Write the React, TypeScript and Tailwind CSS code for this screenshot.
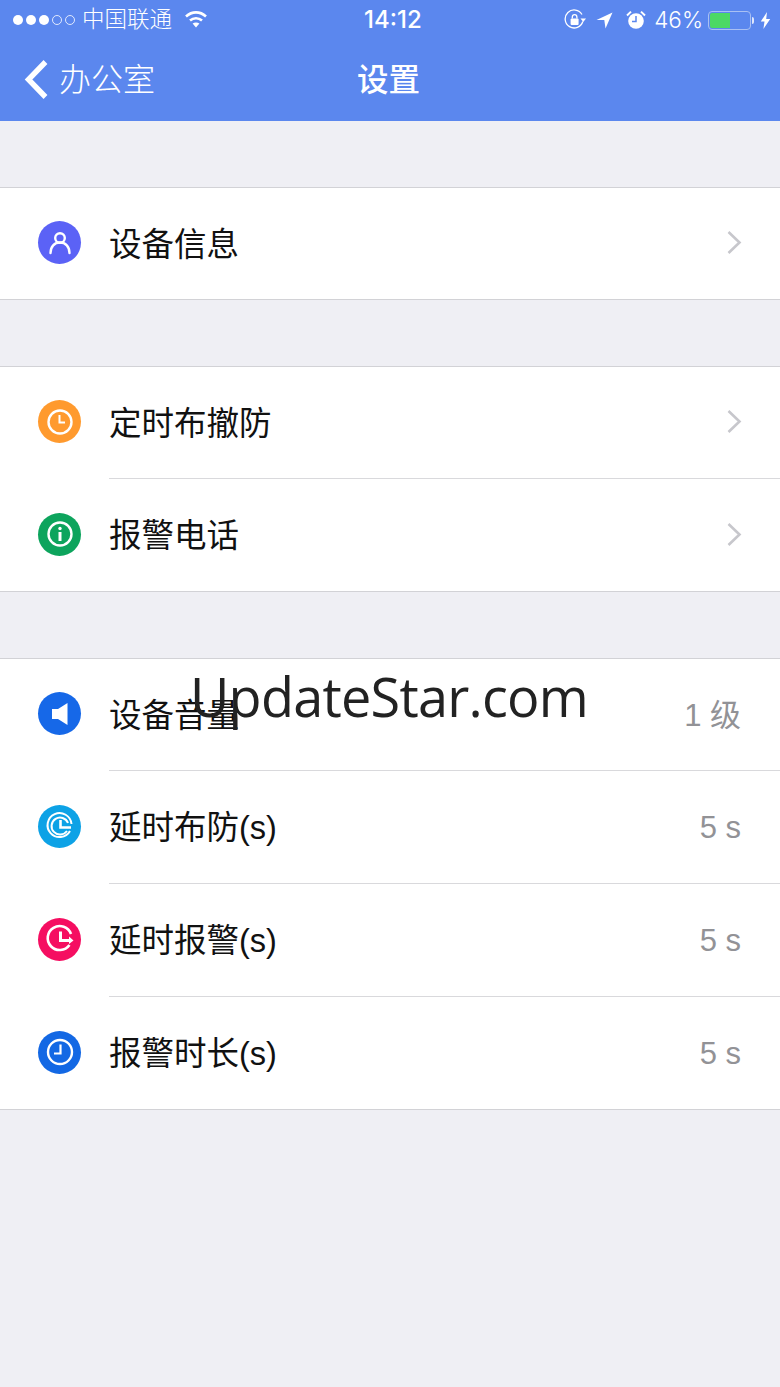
import React from "react";

const FONT = "font-['Liberation_Sans','Noto_Sans_CJK_SC',sans-serif]";

function Wifi() {
  return (
    <svg width="24" height="18" viewBox="0 0 24 18" fill="none" stroke="white" strokeLinecap="butt">
      <path d="M2 6.5C8 1 16 1 22 6.5" strokeWidth="2.6" />
      <path d="M6 10.5C9.5 7.4 14.5 7.4 18 10.5" strokeWidth="2.6" />
      <path d="M12 17.5L8.6 13.6C10.5 12.2 13.5 12.2 15.4 13.6Z" fill="white" stroke="none" />
    </svg>
  );
}

function RotationLock() {
  return (
    <svg width="22" height="22" viewBox="0 0 22 22" fill="none">
      <path d="M18.8 12.5A9 9 0 1 1 18 5.5" stroke="white" strokeWidth="1.3" />
      <path d="M16.5 9.5h5.5l-2.7 3.4Z" fill="white" />
      <rect x="6.6" y="9.5" width="8" height="6.5" rx="1" fill="white" />
      <path d="M8.3 9.5V8a2.3 2.3 0 0 1 4.6 0v1.5" stroke="white" strokeWidth="1.3" />
    </svg>
  );
}

function Location() {
  return (
    <svg width="17" height="17" viewBox="0 0 17 17">
      <path d="M16.5 0.5L0.5 8h7.8l1.2 8.5Z" fill="white" />
    </svg>
  );
}

function Alarm() {
  return (
    <svg width="20" height="20" viewBox="0 0 20 20" fill="none">
      <circle cx="10" cy="11" r="7.8" fill="white" />
      <path d="M10 6v5.5H6" stroke="#5b87ee" strokeWidth="1.5" />
      <path d="M1 5.5L5 1.6M19 5.5L15 1.6" stroke="white" strokeWidth="2" />
    </svg>
  );
}

function Battery() {
  return (
    <div className="flex items-center">
      <div className="h-[19px] w-[43px] rounded-[4px] border border-[#a9c0f3] p-px">
        <div className="h-full w-[20px] rounded-l-[2px] bg-[#4cd964]" />
      </div>
      <div className="ml-[1px] h-[7px] w-[2px] rounded-r-[2px] bg-[#dfe7fb]" />
    </div>
  );
}

function Bolt() {
  return (
    <svg width="11" height="17" viewBox="0 0 11 17">
      <path d="M7 0L0.8 9.5h3.7L3.4 17l6.8-10H6.2Z" fill="white" />
    </svg>
  );
}

function Signal() {
  return (
    <div className="flex items-center gap-[3px]">
      <span className="h-[10px] w-[10px] rounded-full bg-white" />
      <span className="h-[10px] w-[10px] rounded-full bg-white" />
      <span className="h-[10px] w-[10px] rounded-full bg-white" />
      <span className="h-[10px] w-[10px] rounded-full border border-white/80" />
      <span className="h-[10px] w-[10px] rounded-full border border-white/80" />
    </div>
  );
}

function Circle({ color, children }: { color: string; children: React.ReactNode }) {
  return (
    <div className={`mt-[-2px] flex h-[43px] w-[43px] shrink-0 items-center justify-center rounded-full ${color}`}>
      <svg width="44" height="44" viewBox="0 0 44 44" fill="none" stroke="white" strokeWidth="2.4" className="shrink-0">
        {children}
      </svg>
    </div>
  );
}

function Chevron() {
  return (
    <svg width="17" height="25" viewBox="0 0 17 25" fill="none" className="mr-[-2px] mt-[-2px]">
      <path d="M2.5 2L13.5 12.5L2.5 23" stroke="#c7c7cc" strokeWidth="2.6" />
    </svg>
  );
}

function Row({
  icon,
  label,
  value,
  h,
}: {
  icon: React.ReactNode;
  label: string;
  value?: string;
  h: string;
}) {
  return (
    <div className={`flex items-center pl-[38px] pr-[39px] ${h}`}>
      {icon}
      <div className="ml-[28px] flex-1 pt-[2px] text-[32.5px] leading-[40px] font-normal text-[#111111]">{label}</div>
      {value ? (
        <div className="pt-[2px] text-[31px] leading-[40px] font-normal text-[#929296]">{value}</div>
      ) : (
        <Chevron />
      )}
    </div>
  );
}

const Divider = () => <div className="ml-[109px] h-px bg-[#d9d9dc]" />;

const person = (
  <Circle color="bg-[#5b62f6]">
    <circle cx="22" cy="17" r="4.8" />
    <path d="M12.5 32c0-6.5 4-10.5 9.5-10.5s9.5 4 9.5 10.5" strokeLinecap="round" />
  </Circle>
);
const clockOrange = (
  <Circle color="bg-[#ff9a2e]">
    <circle cx="22" cy="22" r="11.5" />
    <path d="M21.5 15v7.5h5.5" strokeWidth="2" />
  </Circle>
);
const info = (
  <Circle color="bg-[#0da45d]">
    <circle cx="22" cy="22" r="11.5" />
    <circle cx="22" cy="16.5" r="1.7" fill="white" stroke="none" />
    <path d="M22 20v9" strokeWidth="3" />
  </Circle>
);
const speaker = (
  <Circle color="bg-[#1668e8]">
    <path d="M14 17h6L29.5 11v22L20 27h-6Z" fill="white" stroke="none" />
  </Circle>
);
const delayCyan = (
  <Circle color="bg-[#0da2e6]">
    <path d="M32 27A12 12 0 1 1 33.5 20" strokeWidth="2" />
    <path d="M29 27A8.5 8.5 0 1 1 30 19" strokeWidth="2" />
    <path d="M22.5 16v7.5H33" strokeWidth="2.6" />
  </Circle>
);
const delayPink = (
  <Circle color="bg-[#f50e61]">
    <path d="M31.5 28A12 12 0 1 1 33 17" strokeWidth="2.6" />
    <path d="M22.5 14.5V23.5H33" strokeWidth="3" />
    <path d="M31 19.5l4.5 4-4.5 3.5Z" fill="white" stroke="none" />
  </Circle>
);
const clockBlue = (
  <Circle color="bg-[#1368e4]">
    <circle cx="22" cy="22" r="12" />
    <path d="M22.5 14.5v9h-6.5" strokeWidth="2.2" />
  </Circle>
);

export default function App() {
  return (
    <div className={`relative h-[1387px] w-[780px] overflow-hidden bg-[#efeff4] ${FONT}`}>
      <header className="h-[121px] bg-[#5b87ee] text-white">
        <div className="flex h-[40px] items-center pl-[13px] pr-[9px]">
          <div className="flex w-[351px] items-center">
            <Signal />
            <span className="ml-[7px] text-[22.5px] leading-[28px] font-light">中国联通</span>
            <span className="ml-[12px] mb-[3px]"><Wifi /></span>
          </div>
          <div className="font-['Inter'] text-[24px] leading-[28px] font-medium">14:12</div>
          <div className="flex flex-1 items-center justify-end">
            <RotationLock />
            <span className="ml-[10px]"><Location /></span>
            <span className="ml-[13px]"><Alarm /></span>
            <span className="ml-[8px] font-['Inter'] text-[22.5px] leading-[28px] font-light">46%</span>
            <span className="ml-[5px]"><Battery /></span>
            <span className="ml-[6px]"><Bolt /></span>
          </div>
        </div>
        <div className="flex h-[80px] items-center pl-[24px]">
          <svg width="25" height="41" viewBox="0 0 25 41" fill="none" className="mt-[-1px]">
            <path d="M21.5 3L4.5 20.5L21.5 38" stroke="white" strokeWidth="5.4" />
          </svg>
          <span className="ml-[10px] text-[32px] leading-[40px] font-light">办公室</span>
          <span className="ml-[202px] text-[31.5px] leading-[40px] font-medium">设置</span>
        </div>
      </header>

      <section className="mt-[66px] border-y border-[#d2d2d6] bg-white">
        <Row icon={person} label="设备信息" h="h-[111px]" />
      </section>

      <section className="mt-[66px] border-y border-[#d2d2d6] bg-white">
        <Row icon={clockOrange} label="定时布撤防" h="h-[111px]" />
        <Divider />
        <Row icon={info} label="报警电话" h="h-[112px]" />
      </section>

      <section className="mt-[66px] border-y border-[#d2d2d6] bg-white">
        <Row icon={speaker} label="设备音量" value="1 级" h="h-[111px]" />
        <Divider />
        <Row icon={delayCyan} label="延时布防(s)" value="5 s" h="h-[112px]" />
        <Divider />
        <Row icon={delayPink} label="延时报警(s)" value="5 s" h="h-[112px]" />
        <Divider />
        <Row icon={clockBlue} label="报警时长(s)" value="5 s" h="h-[112px]" />
      </section>

      <div className="absolute left-[190px] top-[661px] font-['Open_Sans',sans-serif] text-[54px] leading-[70px] tracking-[-0.75px] text-[#222222]">
        UpdateStar.com
      </div>
    </div>
  );
}
